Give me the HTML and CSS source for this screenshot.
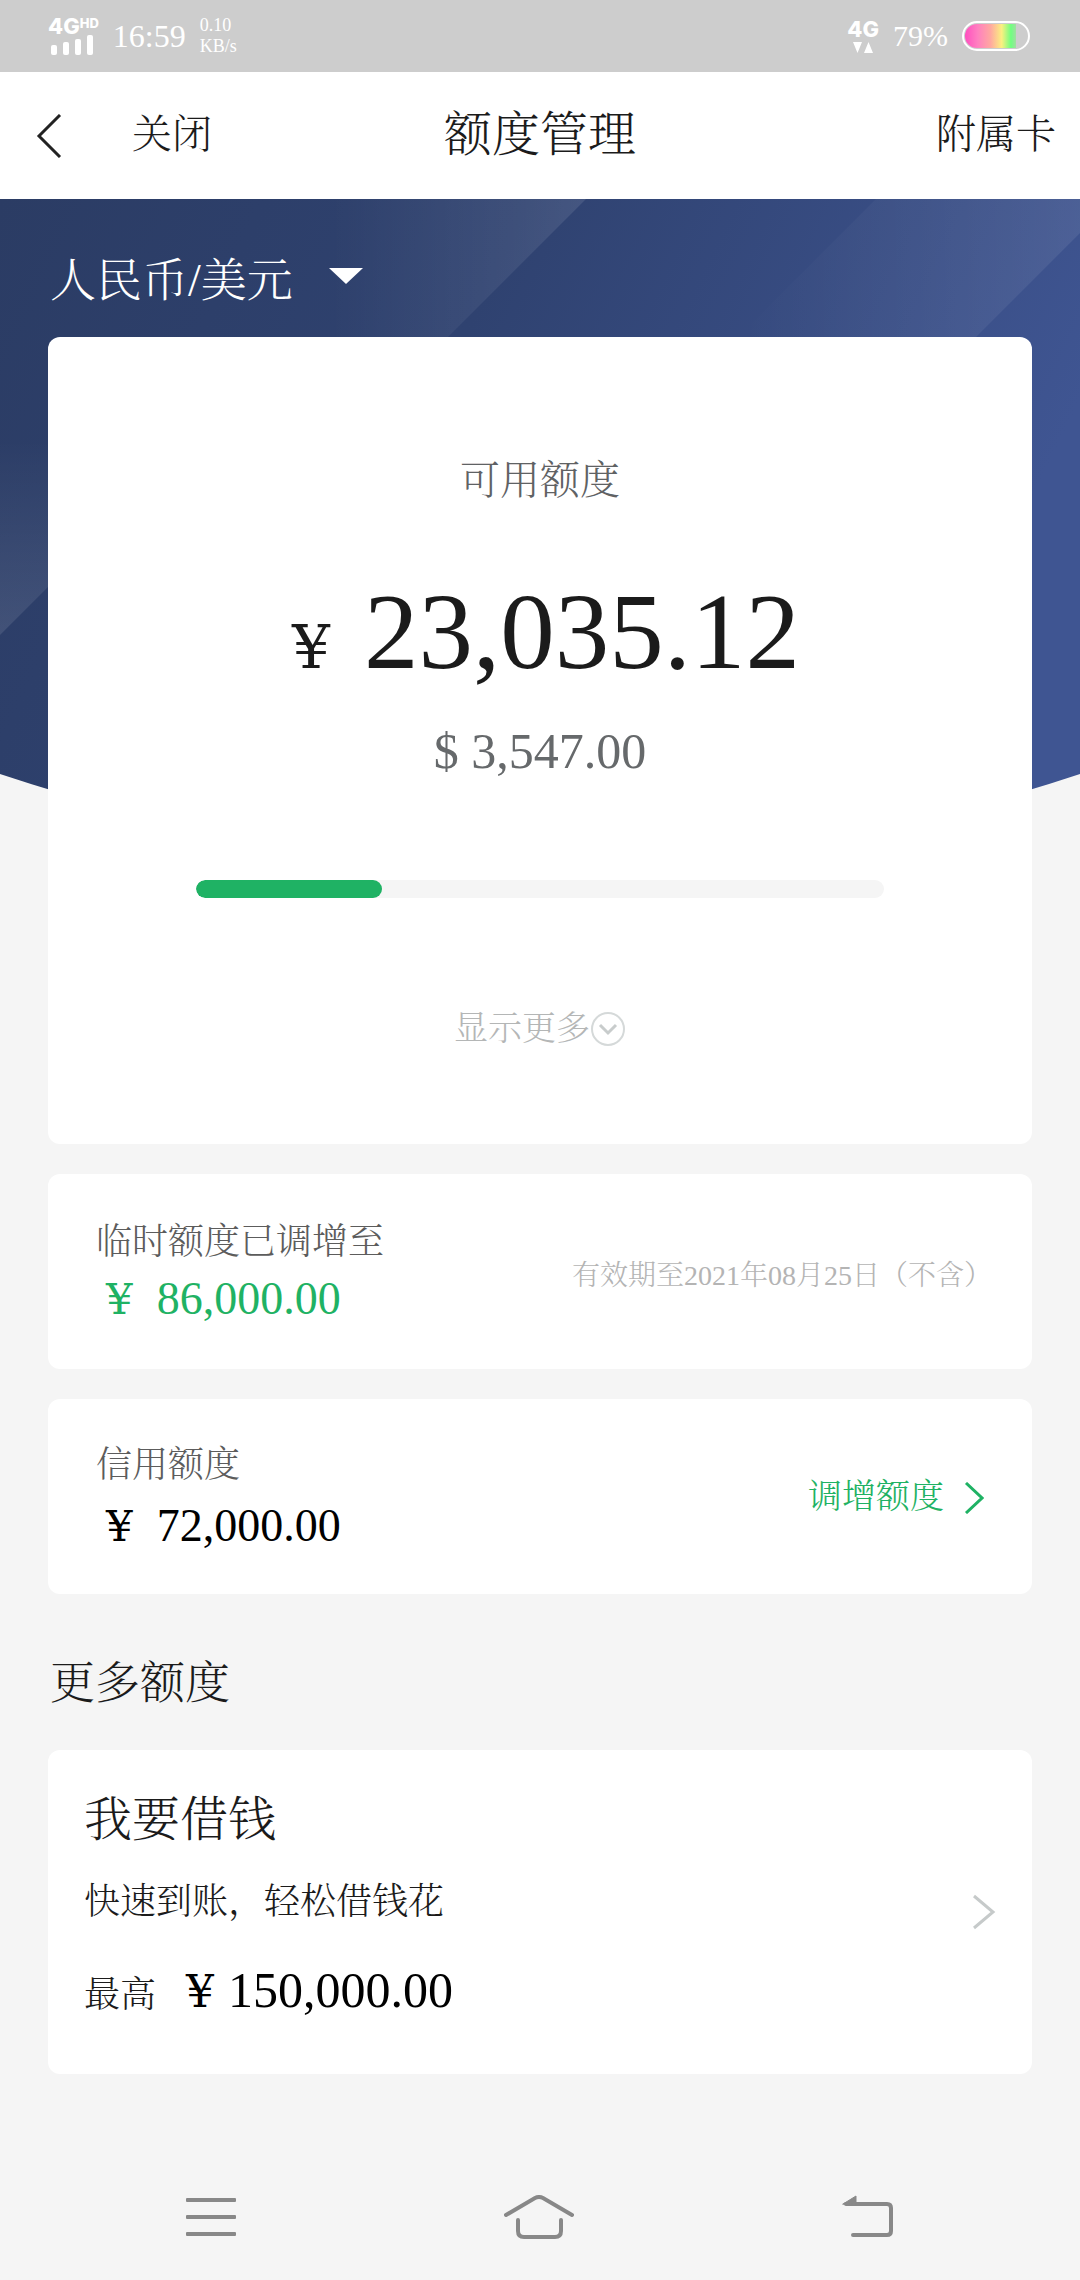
FILE: index.html
```html
<!DOCTYPE html>
<html lang="zh-CN">
<head>
<meta charset="utf-8">
<meta name="viewport" content="width=device-width, initial-scale=1">
<title>额度管理</title>
<link rel="stylesheet" href="styles.css">
</head>
<body>
<div class="status">
  <div class="status-side">
    <div class="signal">
      <span class="net">4G<sup>HD</sup></span>
      <svg width="44" height="20" viewBox="0 0 44 20" fill="#fff"><rect x="0" y="10" width="6" height="10" rx="2"/><rect x="12" y="7" width="6" height="13" rx="2"/><rect x="24" y="4" width="6" height="16" rx="2"/><rect x="36" y="0" width="6" height="20" rx="2"/></svg>
    </div>
    <span class="clock">16:59</span>
    <span class="speed">0.10<br>KB/s</span>
  </div>
  <div class="status-side">
    <div class="data">
      <span class="net">4G</span>
      <svg width="20" height="11" viewBox="0 0 20 11" fill="#fff"><path d="M0 0h9L4.500 11zM11 11h9L15.500 0z"/></svg>
    </div>
    <span class="percent">79%</span>
    <svg width="68" height="30" viewBox="0 0 68 30">
      <defs><linearGradient id="charge"><stop offset="0" stop-color="#ff4fc0"/><stop offset=".25" stop-color="#ff80c0"/><stop offset=".5" stop-color="#ffa8a0"/><stop offset=".72" stop-color="#fbf080"/><stop offset=".9" stop-color="#70ff80"/><stop offset="1" stop-color="#a0e0a0"/></linearGradient></defs>
      <rect x="1" y="1" width="66" height="28" rx="14" fill="none" stroke="#fff" stroke-width="2"/>
      <path d="M15 3H54V27H15A12 12 0 0 1 15 3z" fill="url(#charge)"/>
    </svg>
  </div>
</div>

<header class="topbar">
  <div class="topbar-left">
    <button class="plain" type="button" aria-label="返回"><svg width="26" height="44" viewBox="0 0 26 44" fill="none" stroke="#222" stroke-width="3"><path d="M24 1L3 22L24 43"/></svg></button>
    <button class="plain topbar-text" type="button">关闭</button>
  </div>
  <h1 class="topbar-text">额度管理</h1>
  <a class="topbar-text topbar-right" href="#cards">附属卡</a>
</header>

<main>
  <svg class="backdrop" viewBox="0 0 1080 670" preserveAspectRatio="none" aria-hidden="true">
    <defs>
      <linearGradient id="base" x1="0" y1="0" x2="1" y2=".3"><stop offset="0" stop-color="#2b3c64"/><stop offset=".45" stop-color="#2f4270"/><stop offset="1" stop-color="#3f5592"/></linearGradient>
      <linearGradient id="ray-top" gradientUnits="userSpaceOnUse" x1="330" y1="0" x2="586" y2="0"><stop offset="0" stop-color="#fff" stop-opacity="0"/><stop offset="1" stop-color="#fff" stop-opacity=".1"/></linearGradient>
      <linearGradient id="ray-left" gradientUnits="userSpaceOnUse" x1="0" y1="240" x2="0" y2="430"><stop offset="0" stop-color="#fff" stop-opacity="0"/><stop offset="1" stop-color="#fff" stop-opacity=".1"/></linearGradient>
      <linearGradient id="ray-right" gradientUnits="userSpaceOnUse" x1="740" y1="0" x2="1080" y2="0"><stop offset="0" stop-color="#fff" stop-opacity="0"/><stop offset="1" stop-color="#fff" stop-opacity=".08"/></linearGradient>
      <clipPath id="dome"><path d="M0 0H1080V575Q540 755 0 575z"/></clipPath>
    </defs>
    <g clip-path="url(#dome)">
      <path d="M0 0H1080V670H0z" fill="url(#base)"/>
      <path d="M330 0H586L330 256z" fill="url(#ray-top)"/>
      <path d="M0 240H196L0 436z" fill="url(#ray-left)"/>
      <path d="M876 0H1080V34L740 374V136z" fill="url(#ray-right)"/>
    </g>
  </svg>

  <button class="currency plain" type="button">人民币/美元
    <svg width="34" height="16" viewBox="0 0 34 16" fill="#fff"><path d="M0 0H34L17 16z"/></svg>
  </button>

  <section class="card summary" id="cards">
    <h2 id="avail">可用额度</h2>
    <p class="total"><span class="yen">¥</span><span>23,035.12</span></p>
    <p class="usd">$ 3,547.00</p>
    <progress value="27" max="100" aria-labelledby="avail"></progress>
    <button class="more plain" type="button">显示更多<svg width="36" height="36" viewBox="0 0 36 36" fill="none" stroke="#d5d9d9" stroke-width="2"><circle cx="18" cy="18" r="16"/><path d="M10 14l8 8l8-8" stroke="#c8cccc" stroke-width="3"/></svg></button>
  </section>

  <section class="card limit">
    <div>
      <h3>临时额度已调增至</h3>
      <p class="amount green"><span class="yen">¥</span><span>86,000.00</span></p>
    </div>
    <span class="date">有效期至2021年08月25日（不含）</span>
  </section>

  <section class="card limit limit-credit">
    <div>
      <h3>信用额度</h3>
      <p class="amount"><span class="yen">¥</span><span>72,000.00</span></p>
    </div>
    <a class="raise" href="#raise"><span>调增额度</span><svg width="20" height="32" viewBox="0 0 20 32" fill="none" stroke="#1fb264" stroke-width="3"><path d="M2 1L18 16L2 31"/></svg></a>
  </section>

  <h2 class="section-title">更多额度</h2>
  <a class="card loan" id="loan" href="#loan">
    <div>
      <h3>我要借钱</h3>
      <p class="note">快速到账，轻松借钱花</p>
      <p class="max"><span class="max-label">最高</span><span class="yen">¥</span><span>150,000.00</span></p>
    </div>
    <svg width="24" height="36" viewBox="0 0 24 36" fill="none" stroke="#c6caca" stroke-width="3"><path d="M2 2L21 18L2 34"/></svg>
  </a>
</main>

<nav class="sysnav">
  <button class="plain" type="button" aria-label="菜单"><svg width="50" height="40" viewBox="0 0 50 40" fill="#888"><rect y="1" width="50" height="4" rx="1"/><rect y="18" width="50" height="4" rx="1"/><rect y="35" width="50" height="4" rx="1"/></svg></button>
  <button class="plain" type="button" aria-label="主屏幕"><svg width="70" height="44" viewBox="0 0 70 44" fill="none" stroke="#888" stroke-width="4" stroke-linecap="round"><path d="M2 20L31 3Q35 1 39 3L68 20M14 25V36Q14 42 20 42H51Q57 42 57 36V25"/></svg></button>
  <button class="plain" type="button" aria-label="后退"><svg width="52" height="44" viewBox="0 0 52 44" fill="none" stroke="#888" stroke-width="4" stroke-linecap="round"><path d="M4 9H45Q49 9 49 13V36Q49 40 45 40H11"/><path d="M1 9L14 1V9z" fill="#888" stroke-width="1"/></svg></button>
</nav>
</body>
</html>
```
FILE: styles.css
```css
* { box-sizing: border-box; }

body {
  margin: 0;
  min-height: 100vh;
  display: flex;
  flex-direction: column;
  background: #f5f5f5;
  color: #1b1b1b;
  font-family: "Liberation Serif", "Noto Serif CJK SC", "Noto Sans CJK SC", serif;
  font-weight: 300;
}

h1, h2, h3, p { margin: 0; font-weight: 300; }
a { color: inherit; text-decoration: none; }
svg { display: block; flex: none; }

.plain {
  padding: 0;
  border: 0;
  background: none;
  color: inherit;
  font: inherit;
}

.yen { font-family: "DejaVu Serif", serif; line-height: 1; }

/* Status bar */
.status {
  height: 72px;
  padding: 0 50px 0 48px;
  display: flex;
  align-items: center;
  justify-content: space-between;
  background: #cdcdcd;
  color: #fff;
}
.status-side { display: flex; align-items: center; gap: 14px; }
.signal, .data { display: flex; flex-direction: column; align-items: center; }
.net {
  display: flex;
  font: 800 22px/18px Inter, "Liberation Sans", sans-serif;
}
.net sup { font-size: 13px; line-height: 12px; }
.data { gap: 4px; }
.clock { font-size: 32px; line-height: 40px; }
.speed { font-size: 18px; line-height: 21px; }
.percent { font-size: 30px; line-height: 36px; }

/* Title bar */
.topbar {
  height: 127px;
  padding: 0 24px;
  display: grid;
  grid-template-columns: 1fr auto 1fr;
  align-items: center;
  background: #fff;
  font-size: 40px;
}
.topbar-left { padding-left: 12px; display: flex; align-items: center; gap: 70px; }
.topbar .topbar-text { padding-bottom: 10px; }
.topbar h1 { font-size: 48px; }
.topbar-right { justify-self: end; }

/* Content */
main {
  position: relative;
  flex: 1;
  padding: 0 48px 80px;
}
.backdrop {
  position: absolute;
  top: 0;
  left: 0;
  z-index: -1;
  width: 100%;
  height: 670px;
}
.currency {
  height: 138px;
  padding: 16px 0 0 2px;
  display: flex;
  align-items: center;
  gap: 36px;
  color: #fff;
  font-size: 46px;
}

.card {
  display: flex;
  align-items: center;
  justify-content: space-between;
  margin-bottom: 30px;
  border-radius: 12px;
  background: #fff;
}

.summary { flex-direction: column; padding: 121px 0 92px; }
.summary h2 { color: #5f6264; font-size: 40px; line-height: 46px; }
.total {
  margin-top: 68px;
  padding-left: 12px;
  display: flex;
  align-items: baseline;
  gap: 34px;
  font-size: 109px;
  line-height: 120px;
}
.total .yen { font-size: 60px; }
.usd { margin-top: 29px; color: #66696b; font-size: 50px; line-height: 60px; }

progress {
  appearance: none;
  width: 70%;
  height: 18px;
  margin-top: 99px;
  border: 0;
  border-radius: 9px;
  overflow: hidden;
  background: #f5f5f5;
}
progress::-webkit-progress-bar { background: #f5f5f5; }
progress::-webkit-progress-value { border-radius: 9px; background: #1fb264; }

.more {
  margin-top: 108px;
  display: flex;
  align-items: center;
  color: #b4b6b6;
  font-size: 34px;
  line-height: 46px;
}

.limit { padding: 46px 48px 43px; }
.limit h3 { color: #5c5c5c; font-size: 36px; line-height: 44px; }
.amount {
  margin-top: 8px;
  padding-left: 10px;
  display: flex;
  align-items: baseline;
  gap: 24px;
  color: #000;
  font-size: 46px;
  line-height: 54px;
}
.amount .yen { font-size: 42px; }
.amount.green { color: #1fb264; }
/* The closing full-width bracket hangs into the card padding */
.date { margin-right: -8px; color: #b4b4b4; font-size: 28px; }
.limit-credit { padding-top: 44px; padding-bottom: 41px; }
.limit-credit .amount { margin-top: 12px; }
.raise { display: flex; align-items: center; gap: 20px; color: #1fb264; font-size: 34px; }
.raise span { padding-bottom: 10px; }

.section-title { margin: 60px 0 36px; padding-left: 2px; font-size: 45px; line-height: 60px; }
.loan { margin-bottom: 0; padding: 40px 36px; }
.loan div { padding-bottom: 14px; }
.loan h3 { font-size: 48px; line-height: 60px; }
.note { margin-top: 30px; font-size: 36px; line-height: 44px; }
.max {
  margin-top: 36px;
  display: flex;
  align-items: baseline;
  color: #000;
  font-size: 50px;
  line-height: 60px;
}
.max-label { margin-right: 30px; color: #1b1b1b; font-size: 36px; line-height: 44px; }
.max .yen { margin-right: 14px; font-size: 44px; }

/* System navigation */
.sysnav {
  height: 126px;
  padding: 0 186px;
  display: flex;
  align-items: center;
  justify-content: space-between;
}
```
